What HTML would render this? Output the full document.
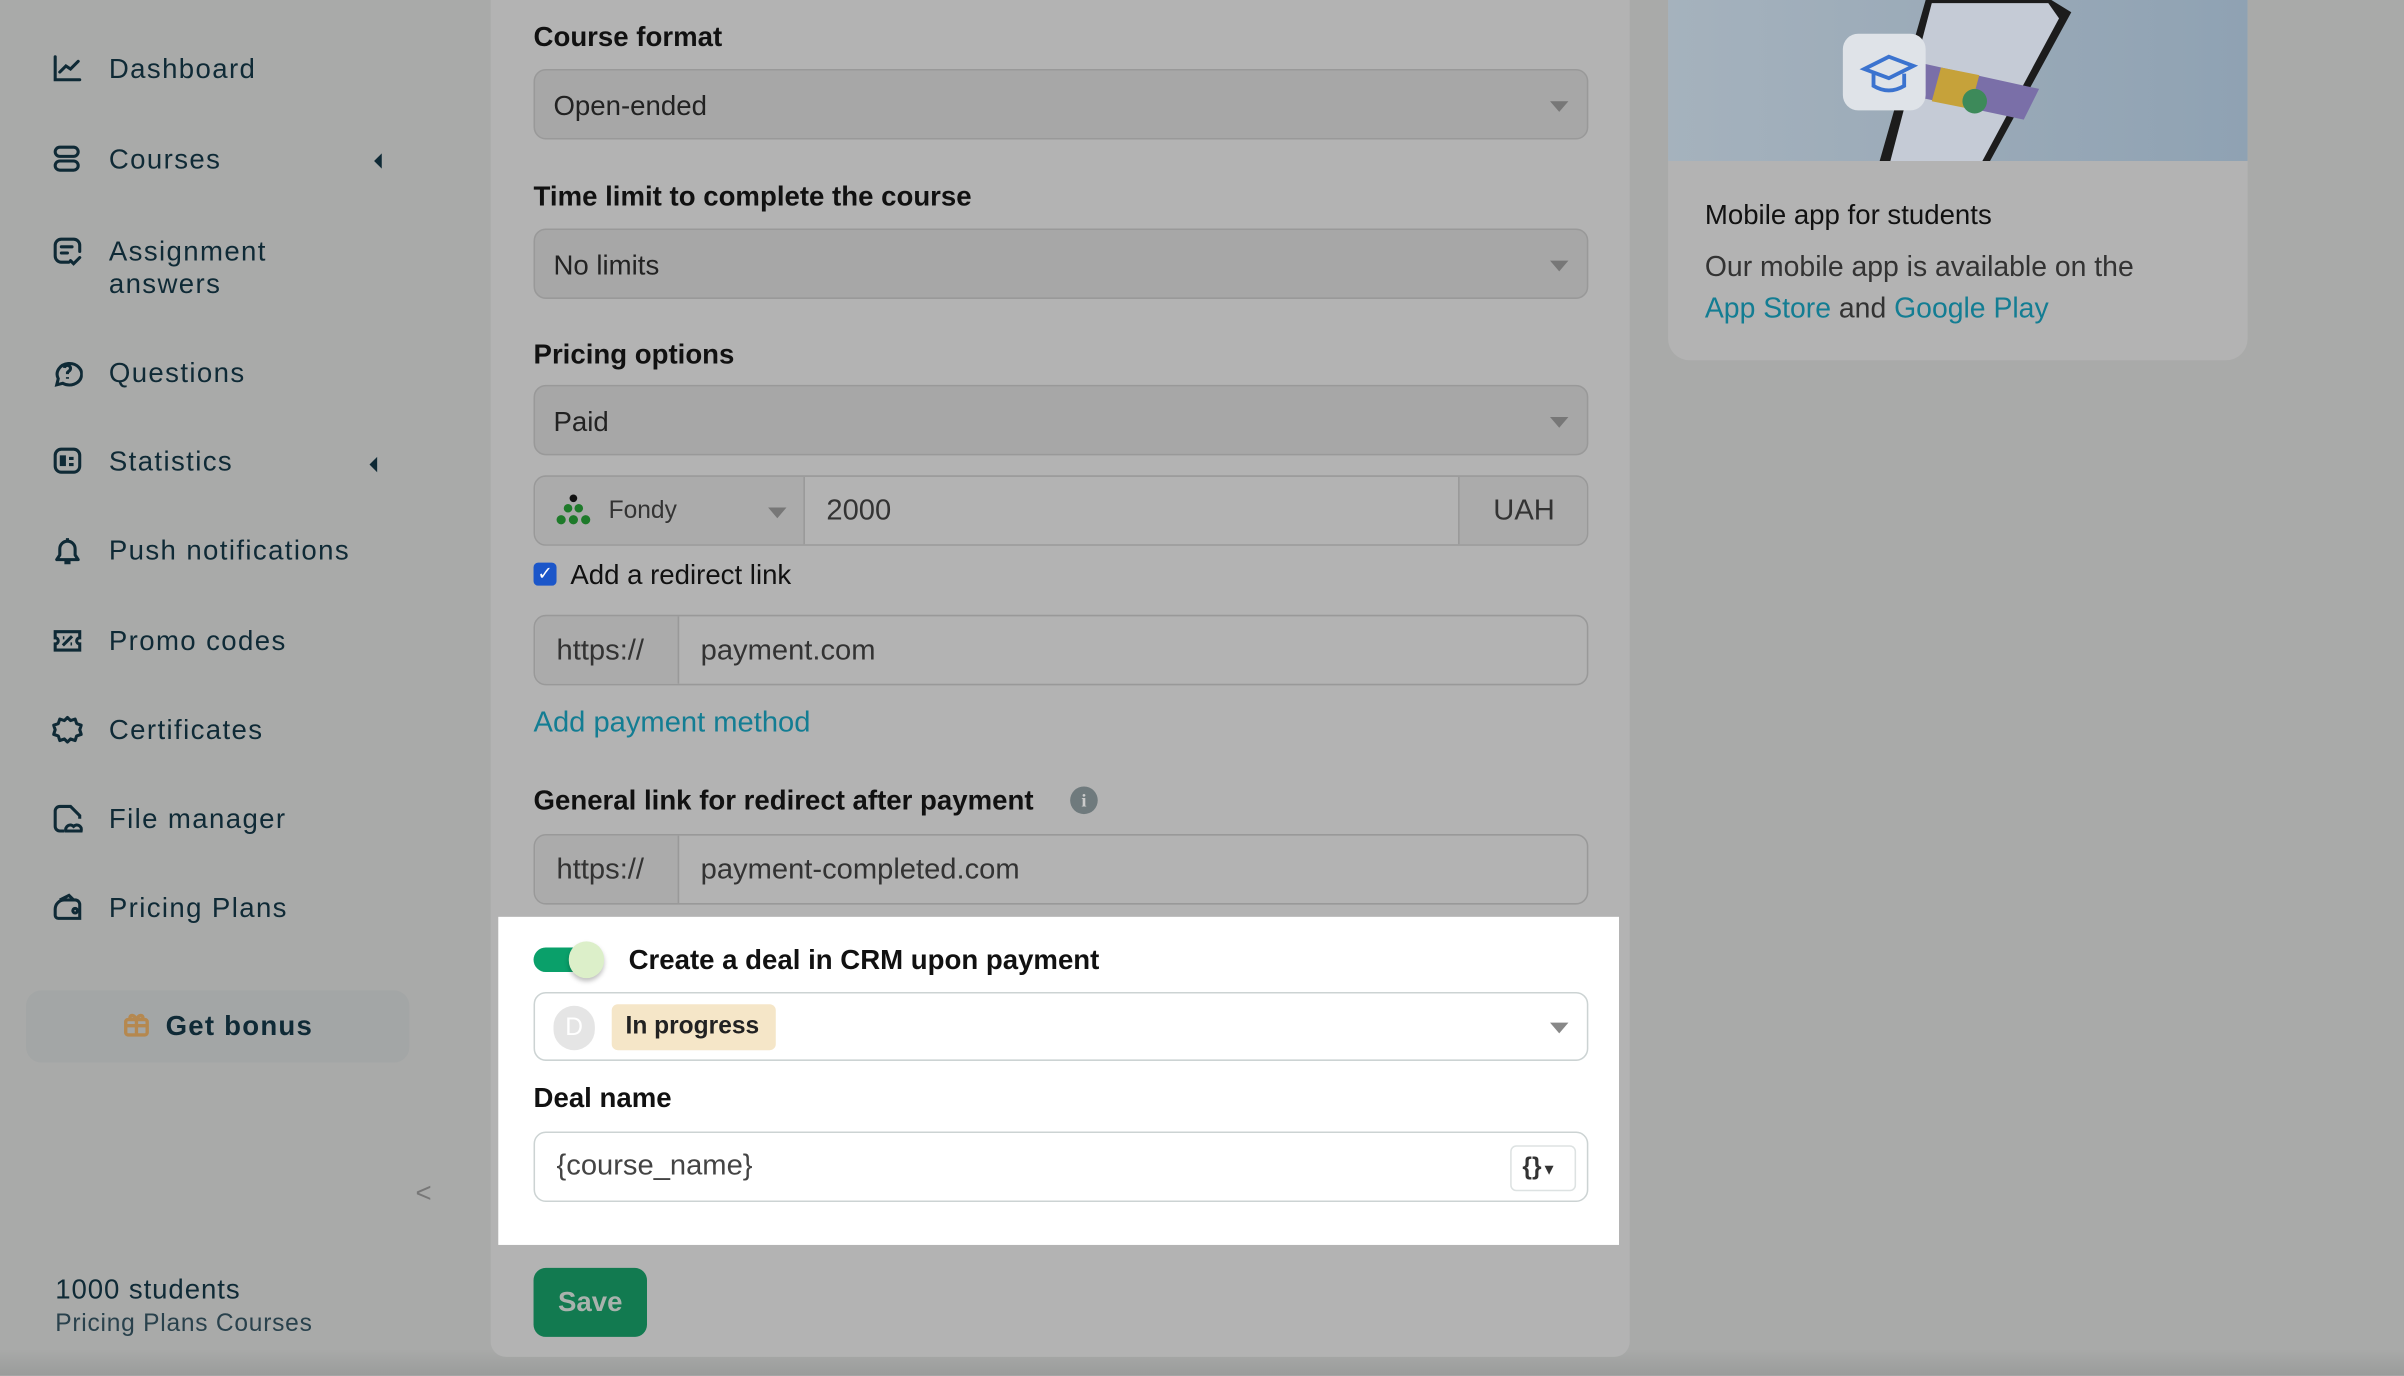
<!DOCTYPE html>
<html><head><meta charset="utf-8"><style>
*{box-sizing:border-box;margin:0;padding:0}
html,body{width:2404px;height:1376px;overflow:hidden;background:#a8aaa9;font-family:"Liberation Sans",sans-serif}
#w{position:absolute;left:0;top:0;width:1568px;height:897px;transform:scale(1.53316);transform-origin:0 0;background:#a9aaa9}
.nav{position:absolute;left:34px;font-size:18px;color:#0f2a36;letter-spacing:.9px}
.nav svg{position:absolute;left:0;top:0;width:20px;height:20px}
.nav span{position:absolute;left:37px;white-space:nowrap;line-height:21px}
.caret{position:absolute;width:0;height:0;border-top:5px solid transparent;border-bottom:5px solid transparent;border-right:5px solid #0f2a36}
#main{position:absolute;left:320px;top:0;width:743px;height:885px;background:#b3b3b3;border-radius:0 0 10px 10px}
.lbl{position:absolute;left:348px;font-size:18px;font-weight:bold;color:#111}
.sel{position:absolute;left:348px;width:688px;height:46px;border:1px solid #999;border-radius:8px;background:#a7a7a7;font-size:18px;color:#222;padding:13px 12px}
.dd{position:absolute;right:12px;top:20px;border-left:6px solid transparent;border-right:6px solid transparent;border-top:7px solid #777}
.inp{position:absolute;left:348px;width:688px;height:46px;border:1px solid #999;border-radius:8px;background:#b3b3b3;font-size:19px;color:#333;overflow:hidden}
.pre{position:absolute;left:0;top:0;bottom:0;width:94px;background:#ababab;border-right:1px solid #999;padding:12px 14px}
.link{color:#137d93}
</style></head><body><div id="w">
<div style="position:absolute;left:0;top:880px;width:1568px;height:17px;background:linear-gradient(#a9aaa9,#9a9c9b)"></div>

<div class="nav" style="top:35px"><svg viewBox="0 0 20 20" fill="none" stroke="#0f2a36" stroke-width="2" stroke-linecap="round"><path d="M2 2v15h16M5 12l4-4 3 2 5-5"/></svg><span>Dashboard</span></div>
<div class="nav" style="top:94px"><svg viewBox="0 0 20 20" fill="none" stroke="#0f2a36" stroke-width="2"><rect x="2" y="2" width="15" height="6" rx="3"/><rect x="2" y="11" width="15" height="6" rx="3"/></svg><span>Courses</span></div>
<div class="caret" style="left:244px;top:100px"></div>
<div class="nav" style="top:154px"><svg viewBox="0 0 20 20" fill="none" stroke="#0f2a36" stroke-width="2" stroke-linecap="round"><path d="M11 17H6a4 4 0 0 1-4-4V6a4 4 0 0 1 4-4h8a4 4 0 0 1 4 4v4M6 7h7M6 11h4M12 16l2 2 4-4"/></svg><span>Assignment<br>answers</span></div>
<div class="nav" style="top:233px"><svg viewBox="0 0 20 20" fill="none" stroke="#0f2a36" stroke-width="2"><path d="M3 18l1-4a8 7 0 1 1 3 3z"/><path d="M8 7a2 2 0 1 1 3 2l-1 1v1M10 13v1"/></svg><span>Questions</span></div>
<div class="nav" style="top:291px"><svg viewBox="0 0 20 20" fill="none" stroke="#0f2a36" stroke-width="2"><rect x="2" y="2" width="16" height="15" rx="4"/><rect x="6" y="7" width="2" height="5" fill="#0f2a36"/><path d="M11 8h3M11 12h3"/></svg><span>Statistics</span></div>
<div class="caret" style="left:241px;top:298px"></div>
<div class="nav" style="top:349px"><svg viewBox="0 0 20 20" fill="none" stroke="#0f2a36" stroke-width="2" stroke-linejoin="round"><path d="M3 16h14l-2-3V9a5 5 0 0 0-10 0v4zM10 2v2M8 18h4"/></svg><span>Push notifications</span></div>
<div class="nav" style="top:408px"><svg viewBox="0 0 20 20" fill="none" stroke="#0f2a36" stroke-width="2"><path d="M2 4h16v4a2 2 0 0 0 0 4v4H2v-4a2 2 0 0 0 0-4z"/><path d="M7 13l6-6M7 8h1M12 12h1"/></svg><span>Promo codes</span></div>
<div class="nav" style="top:466px"><svg viewBox="0 0 20 20" fill="none" stroke="#0f2a36" stroke-width="2" stroke-linejoin="round"><path d="M10 2l2 2 3-1 1 3 3 1-1 3 1 3-3 1-1 3-3-1-2 2-2-2-3 1-1-3-3-1 1-3-1-3 3-1 1-3 3 1z"/></svg><span>Certificates</span></div>
<div class="nav" style="top:524px"><svg viewBox="0 0 20 20" fill="none" stroke="#0f2a36" stroke-width="2"><path d="M8 18H5a3 3 0 0 1-3-3V5a3 3 0 0 1 3-3h7l6 6v2"/><path d="M9 18a3 3 0 0 1 5-3 3 3 0 0 1 5 3z"/></svg><span>File manager</span></div>
<div class="nav" style="top:582px"><svg viewBox="0 0 20 20" fill="none" stroke="#0f2a36" stroke-width="2"><path d="M2 11a6 6 0 0 1 6-6h7a3 3 0 0 1 3 3v9H4a2 2 0 0 1-2-2zM5 5l6-3 3 3"/><circle cx="15" cy="12" r="1.5"/></svg><span>Pricing Plans</span></div>

<div style="position:absolute;left:17px;top:646px;width:250px;height:47px;border-radius:10px;background:#a3a6a6"></div>
<svg style="position:absolute;left:80px;top:659px" width="18" height="18" viewBox="0 0 18 18" fill="none" stroke="#b5884f" stroke-width="2.2"><rect x="2" y="6" width="14" height="10" rx="1.5"/><path d="M9 6v10M2 10h14M9 6C7 2 4 3 5 6M9 6c2-4 5-3 4 0"/></svg>
<div style="position:absolute;left:108px;top:659px;font-size:18px;font-weight:bold;color:#0f2a36;letter-spacing:.8px">Get bonus</div>
<div style="position:absolute;left:271px;top:768px;font-size:18px;color:#777">&lt;</div>
<div style="position:absolute;left:36px;top:831px;font-size:18px;color:#0f2a36;letter-spacing:.6px">1000 students</div>
<div style="position:absolute;left:36px;top:855px;font-size:16px;color:#29414c;letter-spacing:.5px">Pricing Plans Courses</div>

<div id="main"></div>
<div class="lbl" style="top:14px">Course format</div>
<div class="sel" style="top:45px">Open-ended<div class="dd"></div></div>
<div class="lbl" style="top:118px">Time limit to complete the course</div>
<div class="sel" style="top:149px">No limits<div class="dd"></div></div>
<div class="lbl" style="top:221px">Pricing options</div>
<div class="sel" style="top:251px">Paid<div class="dd"></div></div>

<div class="inp" style="top:310px">
 <div style="position:absolute;left:0;top:0;bottom:0;width:176px;background:#ababab;border-right:1px solid #999"></div>
 <svg style="position:absolute;left:13px;top:11px" width="24" height="22" viewBox="0 0 24 22"><circle cx="12" cy="3" r="2.5" fill="#111"/><g fill="#1e7a2a"><circle cx="8.5" cy="9.5" r="2.8"/><circle cx="15.5" cy="9.5" r="2.8"/><circle cx="4" cy="17" r="3"/><circle cx="12" cy="17" r="3"/><circle cx="20" cy="17" r="3"/></g></svg>
 <div style="position:absolute;left:48px;top:14px;font-size:16px;color:#333">Fondy</div>
 <div class="dd" style="left:152px;right:auto"></div>
 <div style="position:absolute;left:190px;top:12px">2000</div>
 <div style="position:absolute;right:0;top:0;bottom:0;width:84px;border-left:1px solid #999;background:#ababab;padding:12px 0 0 22px">UAH</div>
</div>
<div style="position:absolute;left:348px;top:367px;width:15px;height:15px;border-radius:3px;background:#1b56c9;color:#fff;font-size:12px;text-align:center;line-height:15px">✓</div>
<div style="position:absolute;left:372px;top:365px;font-size:18px;color:#111">Add a redirect link</div>
<div class="inp" style="top:401px"><div class="pre">https://</div><div style="position:absolute;left:108px;top:12px">payment.com</div></div>
<div class="link" style="position:absolute;left:348px;top:461px;font-size:19px">Add payment method</div>
<div class="lbl" style="top:512px">General link for redirect after payment</div>
<div style="position:absolute;left:698px;top:513px;width:18px;height:18px;border-radius:9px;background:#6f7a7d;color:#ccc;font-size:12px;font-weight:bold;text-align:center;line-height:18px;font-family:'Liberation Serif',serif">i</div>
<div class="inp" style="top:544px"><div class="pre">https://</div><div style="position:absolute;left:108px;top:12px">payment-completed.com</div></div>

<div style="position:absolute;left:325px;top:598px;width:731px;height:214px;background:#fff"></div>
<div style="position:absolute;left:348px;top:618px;width:42px;height:16px;border-radius:8px;background:#0aa06a"></div>
<div style="position:absolute;left:371px;top:614px;width:23px;height:24px;border-radius:12px;background:#dcefc9;box-shadow:0 2px 3px rgba(0,0,0,.25)"></div>
<div style="position:absolute;left:410px;top:616px;font-size:18px;font-weight:bold;color:#111">Create a deal in CRM upon payment</div>
<div style="position:absolute;left:348px;top:647px;width:688px;height:45px;border:1px solid #ccd3d3;border-radius:8px;background:#fff">
 <div style="position:absolute;left:12px;top:8px;width:27px;height:29px;border-radius:14px;background:#e5e5e5;color:#fff;font-size:16px;text-align:center;line-height:29px">D</div>
 <div style="position:absolute;left:50px;top:7px;width:107px;height:30px;border-radius:4px;background:#f5e6c8;font-size:16px;color:#222;font-weight:bold;padding:6px 9px">In progress</div>
 <div class="dd" style="top:19px;border-top-color:#888"></div>
</div>
<div class="lbl" style="top:706px">Deal name</div>
<div style="position:absolute;left:348px;top:738px;width:688px;height:46px;border:1px solid #ccd3d3;border-radius:8px;background:#fff;font-size:19px;color:#444;padding:11px 14px">{course_name}
 <div style="position:absolute;right:7px;top:8px;width:43px;height:30px;border:1px solid #dde2e2;border-radius:4px;font-size:16px;padding:5px 0 0 7px;color:#333;font-weight:bold">{}<span style="font-size:10px">▼</span></div>
</div>

<div style="position:absolute;left:348px;top:827px;width:74px;height:45px;border-radius:8px;background:#127a50;color:#a9b2ad;font-size:18px;font-weight:bold;text-align:center;line-height:45px">Save</div>

<div style="position:absolute;left:1088px;top:0;width:378px;height:235px;background:#b3b3b3;border-radius:0 0 14px 14px;overflow:hidden">
 <div style="position:absolute;left:0;top:0;width:378px;height:105px;background:linear-gradient(90deg,#a5b2bd,#8fa2b3)"></div>
 <svg style="position:absolute;left:0;top:0" width="378" height="105"><path d="M168 0L138 105h72L263 8 250 0z" fill="#1c1c1c"/><path d="M172 2L145 105h60L255 12 248 2z" fill="#c5cbd6"/><path d="M160 40l82 18-10 20-80-17z" fill="#7a6fa8"/><path d="M178 44l25 5-6 22-25-5z" fill="#c6a23a"/><circle cx="200" cy="66" r="8" fill="#3d8a5a"/><rect x="114" y="22" width="54" height="50" rx="10" fill="#dfe3e8"/><path d="M128 45l16-8 16 6-16 8z M134 48v8q10 6 20 0v-8" fill="none" stroke="#3b73cf" stroke-width="2.5"/></svg>
 <div style="position:absolute;left:24px;top:130px;font-size:18px;color:#111">Mobile app for students</div>
 <div style="position:absolute;left:24px;top:160px;font-size:18.5px;color:#333;line-height:27px">Our mobile app is available on the<br><span class="link">App Store</span> and <span class="link">Google Play</span></div>
</div>
</div></body></html>
